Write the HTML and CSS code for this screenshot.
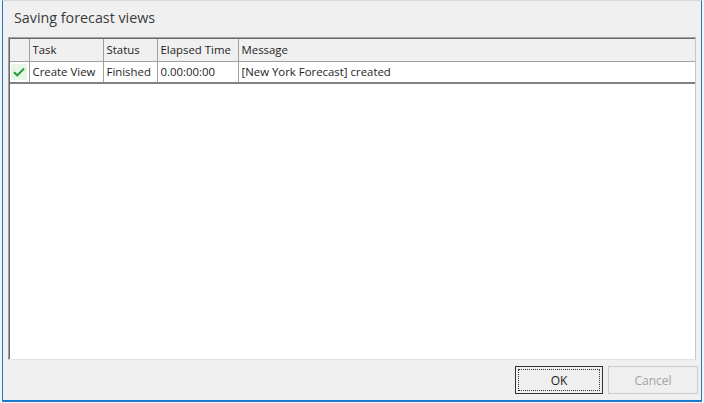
FILE: index.html
```html
<!DOCTYPE html>
<html>
  <head>
    <meta charset="utf-8">
    <title>Saving forecast views</title>
    <link rel="stylesheet" href="styles.css">
  </head>
  <body>
    <div class="dialog">
      <div class="dialog-title">Saving forecast views</div>
      <div class="task-list">
        <table class="task-table">
          <tr class="head-row">
            <th class="col-icon"></th>
            <th class="col-task">Task</th>
            <th class="col-status">Status</th>
            <th class="col-time">Elapsed Time</th>
            <th class="col-msg">Message</th>
          </tr>
          <tr class="task-row">
            <td class="col-icon">
              <span class="ok-mark">
                <svg width="12" height="10" viewBox="0 0 12 10">
                  <path d="M1 5.2 L4.3 8.4 L11 1.6" fill="none" stroke="#1d9a2c" stroke-width="2"/>
                </svg>
              </span>
            </td>
            <td>Create View</td>
            <td>Finished</td>
            <td>0.00:00:00</td>
            <td>[New York Forecast] created</td>
          </tr>
        </table>
      </div>
      <div class="dialog-buttons">
        <button class="btn btn-default"><span class="focus-rect">OK</span></button>
        <button class="btn" disabled>Cancel</button>
      </div>
    </div>
  </body>
</html>
```

FILE: styles.css
```css
body {
  margin: 0;
  padding: 0;
  background: #f4f4f4;
  font-family: "Open Sans", "Noto Sans", sans-serif;
  font-size: 11.4px;
  color: #1e1e1e;
}
.dialog {
  margin-left: 2px;
  width: 698px;
  height: 399px;
  background: #f0f0f0;
  border: 1px solid #1f78d0;
  border-top-color: #d9d9d9;
  border-bottom-width: 2px;
  display: flex;
  flex-direction: column;
}
.dialog-title {
  height: 36px;
  padding-left: 11px;
  font-size: 14.3px;
  line-height: 33px;
  color: #3b3b3b;
}
.task-list {
  margin: 0 5px;
  height: 320px;
  background: #fff;
  border-top: 1px solid #a0a0a0;
  border-left: 1px solid #a0a0a0;
  border-right: 1px solid #c8c8c8;
  border-bottom: 1px solid #e3e3e3;
  box-shadow: inset 1px 1px 0 #696969;
  padding: 1px 0 0 1px;
}
.task-table {
  width: 100%;
  border-collapse: collapse;
  table-layout: fixed;
}
.task-table th,
.task-table td {
  box-sizing: border-box;
  height: 22px;
  padding: 0 3px 1px;
  text-align: left;
  font-weight: normal;
  white-space: nowrap;
  overflow: hidden;
  border-left: 1px solid #a0a0a0;
  border-bottom: 1px solid #a0a0a0;
}
.head-row th {
  background: #f0f0f0;
}
.task-row td {
  border-bottom: 2px solid #808080;
}
.task-table .col-icon {
  width: 19px;
  border-left: none;
  padding: 0 0 0 1px;
}
.col-task { width: 74px; }
.col-status { width: 54px; }
.col-time { width: 81px; }
.ok-mark {
  display: flex;
  align-items: center;
  justify-content: center;
  width: 16px;
  height: 16px;
  background: #e8f6e8;
}
.dialog-buttons {
  flex: 1;
  display: flex;
  justify-content: flex-end;
  align-items: flex-start;
  gap: 5px;
  padding: 6px 3px 0 0;
}
.btn {
  width: 88px;
  height: 28px;
  font-family: inherit;
  font-size: 12px;
  background: #efefef;
  border: 1px solid #cccccc;
  color: #a3a3a3;
  padding: 0;
}
.btn:last-child { width: 90px; }
.btn-default {
  border-color: #333;
  color: #1e1e1e;
  padding: 2px;
}
.focus-rect {
  display: flex;
  align-items: center;
  justify-content: center;
  height: 100%;
  border: 1px dotted #333;
  box-sizing: border-box;
}
```
